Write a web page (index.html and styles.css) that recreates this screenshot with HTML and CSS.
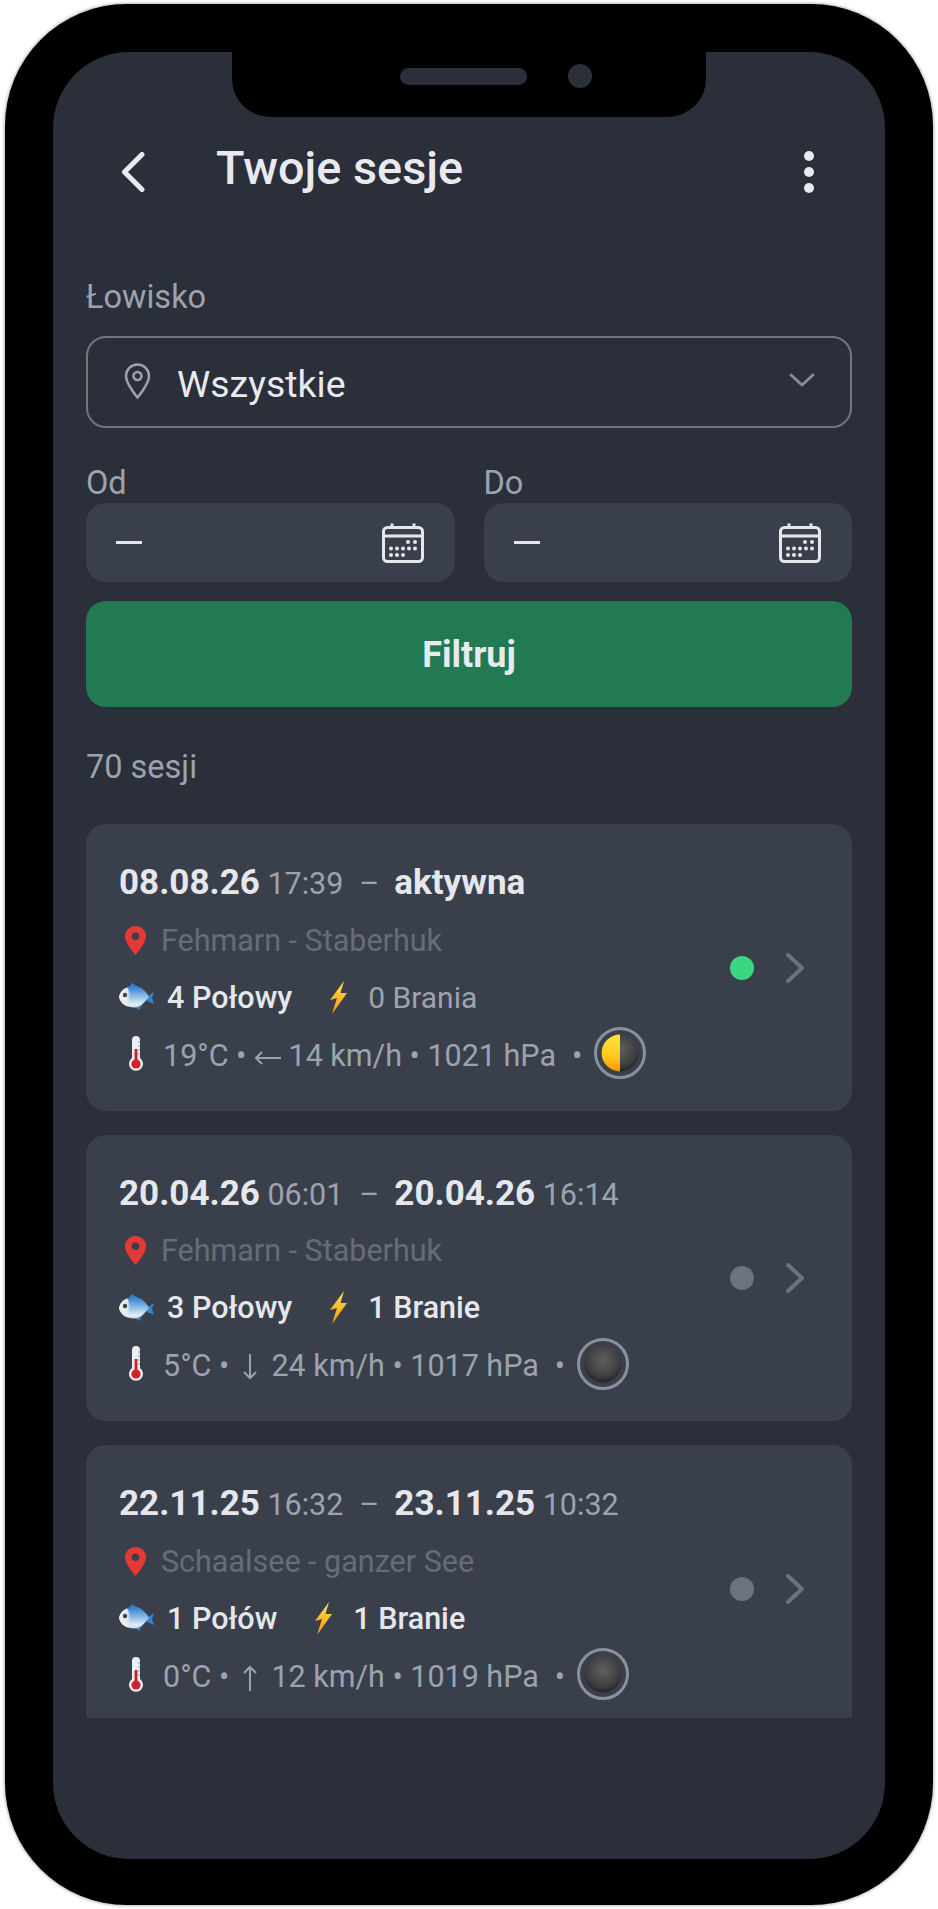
FILE: index.html
```html
<!DOCTYPE html>
<html lang="pl">

<head>
  <meta charset="UTF-8">
  <meta name="viewport" content="width=device-width, initial-scale=1.0">

  <title>Twoje sesje</title>
  <link rel="stylesheet" href="styles.css">
</head>

<body>
<!-- Shared icons -->
<svg class="icon-defs" aria-hidden="true">
  <defs>
    <linearGradient id="fish-body" x1="0" y1="0" x2="0" y2="1">
      <stop offset="0" stop-color="#2a78cc"/>
      <stop offset="0.5" stop-color="#8dbde8"/>
      <stop offset="0.85" stop-color="#e4edf4"/>
      <stop offset="1" stop-color="#cfd8e0"/>
    </linearGradient>
    <linearGradient id="fish-face" x1="0" y1="0" x2="1" y2="0">
      <stop offset="0" stop-color="#f2f4f5"/>
      <stop offset="0.7" stop-color="#e4e9ed"/>
      <stop offset="1" stop-color="#e4e9ed" stop-opacity="0"/>
    </linearGradient>
    <linearGradient id="bolt-fill" x1="0" y1="0" x2="0" y2="1">
      <stop offset="0" stop-color="#ffe04f"/>
      <stop offset="1" stop-color="#f7980f"/>
    </linearGradient>
    <linearGradient id="moon-lit" x1="0" y1="0" x2="0" y2="1">
      <stop offset="0" stop-color="#ffe23e"/>
      <stop offset="0.6" stop-color="#ffc81f"/>
      <stop offset="1" stop-color="#fb9206"/>
    </linearGradient>
    <radialGradient id="moon-dark" cx="0.5" cy="0.4" r="0.6">
      <stop offset="0" stop-color="#5f5f5f"/>
      <stop offset="0.75" stop-color="#3e3e3e"/>
      <stop offset="1" stop-color="#222"/>
    </radialGradient>
  </defs>
  <symbol id="i-fish" viewBox="0 0 36 28">
    <path d="M28 14l7-5-2 6 2 6-7-3z" fill="#2f86d4"/>
    <path d="M11 3l2-3 9 6zM16 24l8-3-4 6z" fill="#3180cc"/>
    <path d="M0 14C2 6 9 2.500 15 2.500c6 0 11 5 15 11-4 6-9 11-15 11C8 24.500 2 21 0 14z" fill="url(#fish-body)"/>
    <path d="M0 14C1 9 4 6 8 4.500c4 4 5 14 2 19C5 23 1 19 0 14z" fill="url(#fish-face)"/>
    <circle cx="6" cy="12" r="2.200" fill="#454545"/>
  </symbol>
  <symbol id="i-bolt" viewBox="0 0 19 35">
    <path d="M15 1L1 20l7-2-5 16 15-21h-6.500z" fill="url(#bolt-fill)"/>
  </symbol>
  <symbol id="i-therm" viewBox="0 0 14 35">
    <path d="M3 4a4 4 0 0 1 8 0v18a7 7 0 1 1-8 0z" fill="#eceff2"/>
    <rect x="5.600" y="13" width="2.800" height="12" fill="#c8202a"/>
    <circle cx="7" cy="28" r="4.600" fill="#d2232c"/>
    <path d="M9 6h2M9 10h2M9 14h2M9 18h2" stroke="#9aa0a8" stroke-width="1"/>
  </symbol>
  <symbol id="i-pin" viewBox="0 0 21 29">
    <path d="M10.500 0C4.700 0 0 4.600 0 10.300 0 17.500 10.500 29 10.500 29S21 17.500 21 10.300C21 4.600 16.300 0 10.500 0z" fill="#e53935"/>
    <circle cx="10.500" cy="10.300" r="3.800" fill="#3a404b"/>
  </symbol>
  <symbol id="i-calendar" viewBox="0 0 42 40">
    <rect x="1.500" y="4.500" width="39" height="34" rx="4" fill="none" stroke="#e5e7eb" stroke-width="3"/>
    <path d="M1.500 13h39M10 0.500v5M32 0.500v5" fill="none" stroke="#e5e7eb" stroke-width="3"/>
    <g fill="#e5e7eb">
      <circle cx="26" cy="19" r="2"/><circle cx="33" cy="19" r="2"/>
      <circle cx="9" cy="25.500" r="2"/><circle cx="15" cy="25.500" r="2"/><circle cx="21" cy="25.500" r="2"/><circle cx="27" cy="25.500" r="2"/><circle cx="33" cy="25.500" r="2"/>
      <circle cx="9" cy="32" r="2"/><circle cx="15" cy="32" r="2"/><circle cx="21" cy="32" r="2"/>
    </g>
  </symbol>
  <symbol id="i-moon-new" viewBox="0 0 52 52">
    <circle cx="26" cy="26" r="24.500" fill="none" stroke="#8a919c" stroke-width="3"/>
    <circle cx="26" cy="26" r="18.500" fill="url(#moon-dark)"/>
  </symbol>
  <symbol id="i-moon-half" viewBox="0 0 52 52">
    <circle cx="26" cy="26" r="24.500" fill="none" stroke="#8a919c" stroke-width="3"/>
    <circle cx="26" cy="26" r="18.500" fill="url(#moon-dark)"/>
    <path d="M26 7.500a18.500 18.500 0 0 0 0 37z" fill="url(#moon-lit)"/>
  </symbol>
  <symbol id="i-chevron" viewBox="0 0 18 30">
    <path d="M2 2l14 13L2 28" fill="none" stroke="#6b7280" stroke-width="4" stroke-linecap="round" stroke-linejoin="round"/>
  </symbol>
</svg>

<div class="phone">
  <div class="notch">
    <span class="speaker"></span>
    <span class="camera"></span>
  </div>

  <div class="screen">
    <header class="top-bar">
      <svg class="back-icon" viewBox="0 0 24 40">
        <path d="M21 2.500L3.500 20 21 37.500" fill="none" stroke="#e8eaf0" stroke-width="5" stroke-linecap="round" stroke-linejoin="round"/>
      </svg>
      <h1 class="page-title">Twoje sesje</h1>
      <div class="more-menu"><span></span><span></span><span></span></div>
    </header>

    <div class="field-label spot-label">Łowisko</div>
    <div class="select-box">
      <svg class="select-pin" viewBox="0 0 27 36">
        <path d="M13.500 1.500C7 1.500 2 6.600 2 13c0 8 11.500 21.500 11.500 21.500S25 21 25 13c0-6.400-5-11.500-11.500-11.500z" fill="none" stroke="#9ca3af" stroke-width="2.500"/>
        <circle cx="13.500" cy="13" r="4" fill="none" stroke="#9ca3af" stroke-width="2.500"/>
      </svg>
      <span class="select-value">Wszystkie</span>
      <svg class="select-arrow" viewBox="0 0 26 14">
        <path d="M2 2l11 10L24 2" fill="none" stroke="#858b97" stroke-width="3" stroke-linecap="round" stroke-linejoin="round"/>
      </svg>
    </div>

    <div class="date-row">
      <div class="date-col">
        <div class="field-label">Od</div>
        <div class="date-input">
          <span class="date-dash"></span>
          <svg class="calendar-icon"><use href="#i-calendar"/></svg>
        </div>
      </div>
      <div class="date-col">
        <div class="field-label">Do</div>
        <div class="date-input">
          <span class="date-dash"></span>
          <svg class="calendar-icon"><use href="#i-calendar"/></svg>
        </div>
      </div>
    </div>

    <button class="filter-button">Filtruj</button>

    <div class="session-count">70 sesji</div>

    <div class="session-list">
      <div class="session-card">
        <div class="session-info">
          <div class="session-dates"><b>08.08.26</b> <span class="time">17:39</span><span class="sep">–</span><b>aktywna</b></div>
          <div class="session-spot"><svg class="spot-pin"><use href="#i-pin"/></svg>Fehmarn - Staberhuk</div>
          <div class="session-stats">
            <svg class="fish-icon"><use href="#i-fish"/></svg><span class="stat">4 Połowy</span>
            <svg class="bolt-icon"><use href="#i-bolt"/></svg><span class="stat stat-none">0 Brania</span>
          </div>
          <div class="session-weather">
            <svg class="therm-icon"><use href="#i-therm"/></svg>
            <span class="weather-text">19°C • <svg class="wind-h" viewBox="0 0 27 14"><path d="M27 7H2M8 1L2 7l6 6" fill="none" stroke="#9ca3af" stroke-width="2"/></svg> 14 km/h • 1021 hPa</span>
            <span class="weather-dot">•</span>
            <svg class="moon-icon"><use href="#i-moon-half"/></svg>
          </div>
        </div>
        <span class="status-dot status-active"></span>
        <svg class="card-chevron"><use href="#i-chevron"/></svg>
      </div>

      <div class="session-card">
        <div class="session-info">
          <div class="session-dates"><b>20.04.26</b> <span class="time">06:01</span><span class="sep">–</span><b>20.04.26</b> <span class="time">16:14</span></div>
          <div class="session-spot"><svg class="spot-pin"><use href="#i-pin"/></svg>Fehmarn - Staberhuk</div>
          <div class="session-stats">
            <svg class="fish-icon"><use href="#i-fish"/></svg><span class="stat">3 Połowy</span>
            <svg class="bolt-icon"><use href="#i-bolt"/></svg><span class="stat">1 Branie</span>
          </div>
          <div class="session-weather">
            <svg class="therm-icon"><use href="#i-therm"/></svg>
            <span class="weather-text">5°C • <svg class="wind-v" viewBox="0 0 14 26"><path d="M7 0v24M1 18l6 6 6-6" fill="none" stroke="#9ca3af" stroke-width="2"/></svg> 24 km/h • 1017 hPa</span>
            <span class="weather-dot">•</span>
            <svg class="moon-icon"><use href="#i-moon-new"/></svg>
          </div>
        </div>
        <span class="status-dot"></span>
        <svg class="card-chevron"><use href="#i-chevron"/></svg>
      </div>

      <div class="session-card">
        <div class="session-info">
          <div class="session-dates"><b>22.11.25</b> <span class="time">16:32</span><span class="sep">–</span><b>23.11.25</b> <span class="time">10:32</span></div>
          <div class="session-spot"><svg class="spot-pin"><use href="#i-pin"/></svg>Schaalsee - ganzer See</div>
          <div class="session-stats">
            <svg class="fish-icon"><use href="#i-fish"/></svg><span class="stat">1 Połów</span>
            <svg class="bolt-icon"><use href="#i-bolt"/></svg><span class="stat">1 Branie</span>
          </div>
          <div class="session-weather">
            <svg class="therm-icon"><use href="#i-therm"/></svg>
            <span class="weather-text">0°C • <svg class="wind-v" viewBox="0 0 14 26"><path d="M7 26V2M1 8l6-6 6 6" fill="none" stroke="#9ca3af" stroke-width="2"/></svg> 12 km/h • 1019 hPa</span>
            <span class="weather-dot">•</span>
            <svg class="moon-icon"><use href="#i-moon-new"/></svg>
          </div>
        </div>
        <span class="status-dot"></span>
        <svg class="card-chevron"><use href="#i-chevron"/></svg>
      </div>
    </div>
  </div>
</div>
</body>

</html>
```

FILE: styles.css
```css
:root {
  --color-screen: #2b2f3a;
  --color-card: #3a404b;
  --color-text: #e5e7eb;
  --color-muted: #9ca3af;
  --color-faint: #666c78;
}

* {
  box-sizing: border-box;
}

body {
  margin: 0;
  padding: 4px 5px;
  background-color: #fff;
  font-family: Roboto, "Liberation Sans", sans-serif;
  color: var(--color-text);
}

.icon-defs {
  position: absolute;
  width: 0;
  height: 0;
}

.phone {
  position: relative;
  height: 1901px;
  padding: 48px;
  background-color: #000;
  border-radius: 122px;
  box-shadow: 0 0 3px 1px #b8b8b8;
}

.notch {
  position: absolute;
  top: 48px;
  left: 227px;
  width: 474px;
  height: 65px;
  display: flex;
  background-color: #000;
  border-radius: 0 0 38px 38px;
}

.speaker {
  position: absolute;
  top: 16px;
  left: 168px;
  width: 127px;
  height: 17px;
  border-radius: 9px;
  background-color: #2b2f3a;
}

.camera {
  position: absolute;
  top: 12px;
  left: 336px;
  width: 24px;
  height: 24px;
  border-radius: 50%;
  background-color: #2b2f3a;
}

.screen {
  height: 1807px;
  padding: 88px 33px 0;
  background-color: var(--color-screen);
  border-radius: 76px;
  overflow: hidden;
}

.top-bar {
  height: 56px;
  display: flex;
  align-items: center;
}

.back-icon {
  width: 24px;
  height: 40px;
  margin: 7px 0 0 35px;
  flex: none;
}

.page-title {
  margin: 0 0 0 71px;
  font-size: 46.800px;
  line-height: 56px;
  font-weight: 500;
  color: #e8eaf0;
}

.more-menu {
  margin: 8px 38px 0 auto;
  display: flex;
  flex-direction: column;
  gap: 6px;
}

.more-menu span {
  width: 10px;
  height: 10px;
  border-radius: 50%;
  background-color: #e8eaf0;
}

.field-label {
  font-size: 32.500px;
  line-height: 36px;
  color: var(--color-muted);
}

.spot-label {
  margin-top: 83px;
}

.select-box {
  height: 92px;
  margin-top: 21px;
  padding: 0 35px 0 36px;
  display: flex;
  align-items: center;
  border: 2px solid #6f7582;
  border-radius: 20px;
}

.select-pin {
  width: 27px;
  height: 36px;
  flex: none;
  margin-top: -3px;
}

.select-value {
  margin-left: 26px;
  padding-top: 4px;
  font-size: 37.500px;
  color: #e8eaf0;
}

.select-arrow {
  width: 26px;
  height: 14px;
  margin-left: auto;
  margin-top: -4px;
}

.date-row {
  margin-top: 37px;
  display: flex;
  gap: 29px;
}

.date-col {
  flex: 1;
}

.date-input {
  height: 79px;
  margin-top: 2px;
  padding: 0 31px 0 30px;
  display: flex;
  align-items: center;
  justify-content: space-between;
  background-color: var(--color-card);
  border-radius: 20px;
}

.date-dash {
  width: 26px;
  height: 3px;
  background-color: var(--color-text);
}

.calendar-icon {
  width: 42px;
  height: 40px;
}

.filter-button {
  display: block;
  width: 100%;
  height: 106px;
  margin-top: 19px;
  padding-top: 3px;
  border: none;
  border-radius: 20px;
  background-color: #217a52;
  font-family: inherit;
  font-size: 36px;
  font-weight: 700;
  color: #e8eaf0;
}

.session-count {
  margin-top: 42px;
  font-size: 32.500px;
  line-height: 36px;
  color: var(--color-muted);
}

.session-list {
  height: 894px;
  margin-top: 39px;
  display: flex;
  flex-direction: column;
  gap: 24px;
  overflow: hidden;
}

.session-card {
  flex: none;
  height: 286.500px;
  padding: 39px 48px 0 33px;
  display: flex;
  align-items: center;
  background-color: var(--color-card);
  border-radius: 20px;
}

.session-info {
  flex: 1;
  align-self: flex-start;
}

.session-dates {
  height: 40px;
  font-size: 30.500px;
  line-height: 40px;
  color: var(--color-muted);
  white-space: nowrap;
}

.session-dates b {
  font-size: 35px;
  font-weight: 700;
  color: var(--color-text);
}

.sep {
  margin: 0 15px 0 16px;
}

.session-spot {
  height: 36px;
  margin-top: 19px;
  display: flex;
  align-items: center;
  font-size: 30.500px;
  color: var(--color-faint);
}

.spot-pin {
  width: 21px;
  height: 29px;
  margin: 0 15px 0 6px;
}

.session-stats {
  height: 36px;
  margin-top: 21px;
  display: flex;
  align-items: center;
  font-size: 30.500px;
}

.fish-icon {
  width: 36px;
  height: 28px;
  margin-right: 12px;
}

.bolt-icon {
  width: 19px;
  height: 35px;
  margin: 0 20px 0 37px;
}

.stat {
  font-weight: 500;
  color: var(--color-text);
}

.stat-none {
  font-size: 30px;
  font-weight: 400;
  color: var(--color-muted);
}

.session-weather {
  height: 52px;
  margin-top: 12px;
  display: flex;
  align-items: center;
  font-size: 30.500px;
  color: var(--color-muted);
}

.therm-icon {
  width: 14px;
  height: 35px;
  margin: 0 20px 0 10px;
}

.weather-text {
  padding-top: 4px;
  white-space: nowrap;
}

.weather-dot {
  margin: 0 12px 0 16px;
  padding-top: 4px;
}

.wind-h {
  width: 27px;
  height: 14px;
  vertical-align: 1px;
}

.wind-v {
  width: 14px;
  height: 26px;
  margin: 0 6.500px;
  vertical-align: -4px;
}

.moon-icon {
  width: 52px;
  height: 52px;
}

.status-dot {
  flex: none;
  width: 24px;
  height: 24px;
  margin-top: -38px;
  border-radius: 50%;
  background-color: #6b7280;
}

.status-active {
  background-color: #3ad681;
}

.card-chevron {
  flex: none;
  width: 18px;
  height: 30px;
  margin: -38px 0 0 32px;
}
```
